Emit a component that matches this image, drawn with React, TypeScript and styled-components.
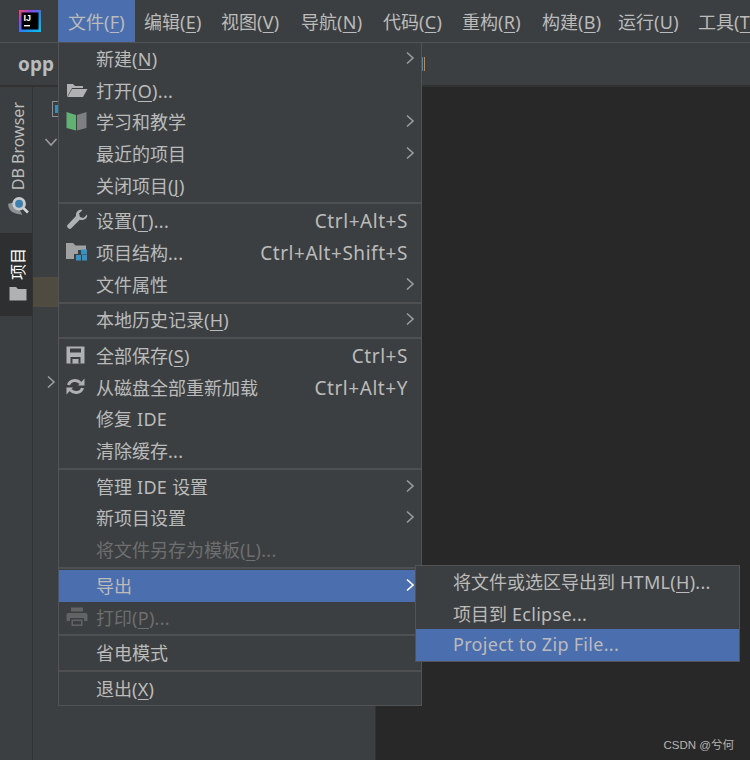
import React from "react";
import styled, { createGlobalStyle } from "styled-components";

const FONT = `"Noto Sans", "Noto Sans CJK SC", sans-serif`;
const HIGHLIGHT = "#4b6eaf";

const GlobalStyle = createGlobalStyle`
  html, body {
    margin: 0;
    padding: 0;
    background: #3c3f41;
  }
  body {
    font-family: ${FONT};
    font-size: 18px;
    color: #bbbbbb;
  }
  u {
    text-underline-offset: 3px;
    text-decoration-thickness: 1px;
  }
`;

const Window = styled.div`
  position: relative;
  display: flex;
  flex-direction: column;
  width: 750px;
  height: 760px;
  overflow: hidden;
  background: #3c3f41;
`;

const MenuBar = styled.div`
  display: flex;
  flex: 0 0 43px;
  box-sizing: border-box;
  height: 43px;
  border-bottom: 1px solid #515355;
  padding-left: 19px;
  white-space: nowrap;
`;

const LogoSlot = styled.div`
  display: flex;
  flex: 0 0 39px;
  align-items: center;
  height: 42px;
`;

const TopItem = styled.div<{ $active?: boolean; $width: number }>`
  flex: 0 0 ${p => p.$width}px;
  box-sizing: border-box;
  height: 42px;
  padding-left: ${p => (p.$active ? 10 : 9)}px;
  line-height: 44px;
  background: ${p => (p.$active ? HIGHLIGHT : "transparent")};
`;

const Toolbar = styled.div`
  flex: 0 0 42px;
  display: flex;
  align-items: center;
  padding-left: 18px;
  border-bottom: 2px solid #323232;
`;

const ProjectName = styled.span`
  width: 37px;
  font-size: 19px;
  font-weight: 700;
  color: #bbbbbb;
`;

const Caret = styled.span`
  width: 1px;
  height: 14px;
  margin-left: 367px;
  border-left: 1px solid #4a88c7;
  border-right: 1px solid #c58a3e;
`;

const Body = styled.div`
  flex: 1;
  display: flex;
  min-height: 0;
`;

const ToolStrip = styled.div`
  flex: 0 0 32px;
  display: flex;
  flex-direction: column;
  padding-top: 10px;
  border-right: 1px solid #323232;
`;

const ToolTab = styled.div<{ $active?: boolean; $height: number }>`
  display: flex;
  flex-direction: column;
  align-items: center;
  justify-content: flex-end;
  gap: 6px;
  box-sizing: border-box;
  height: ${p => p.$height}px;
  padding: 0 0 15px 3px;
  background: ${p => (p.$active ? "#2d2f30" : "transparent")};
  color: ${p => (p.$active ? "#ffffff" : "#bbbbbb")};
`;

const ToolLabel = styled.span`
  writing-mode: vertical-rl;
  text-orientation: sideways;
  transform: rotate(180deg);
  font-size: 16px;
  line-height: 20px;
  white-space: nowrap;
`;

const ProjectPanel = styled.div`
  flex: 0 0 342px;
  display: flex;
  flex-direction: column;
  border-right: 1px solid #323232;
`;

const TreeRow = styled.div<{ $height: number; $selected?: boolean }>`
  display: flex;
  align-items: center;
  height: ${p => p.$height}px;
  padding-left: 13px;
  background: ${p => (p.$selected ? "#4f4b41" : "transparent")};
`;

const Editor = styled.div`
  flex: 1;
  background: #282828;
`;

const Menu = styled.div`
  position: absolute;
  left: 58px;
  top: 42px;
  width: 364px;
  box-sizing: border-box;
  border: 1px solid #515355;
  background: #3c3f41;
`;

const SubMenu = styled(Menu)`
  left: 415px;
  top: 565px;
  width: 325px;
`;

const Row = styled.div<{ $active?: boolean; $disabled?: boolean }>`
  display: flex;
  align-items: center;
  box-sizing: border-box;
  height: 31.7px;
  padding: 0 6px 2px 7px;
  white-space: nowrap;
  background: ${p => (p.$active ? HIGHLIGHT : "transparent")};
  color: ${p => (p.$disabled ? "#6e6e6e" : "#bbbbbb")};
`;

const IconSlot = styled.span`
  flex: 0 0 30px;
  display: flex;
  align-items: center;
`;

const Label = styled.span`
  flex: 1;
`;

const Shortcut = styled.span`
  margin: 2px 7px 0 0;
  font-size: 19px;
  letter-spacing: 0.55px;
`;

const Latin = styled.span`
  letter-spacing: 0.3px;
`;

const Separator = styled.div`
  height: 2px;
  margin: 1px 0;
  background: #4e5052;
`;

const Watermark = styled.div`
  position: absolute;
  right: 16px;
  bottom: 8px;
  font-family: "Liberation Sans", "Noto Sans CJK SC", sans-serif;
  font-size: 11.5px;
  color: #b5b5b5;
`;

// "_" marks the mnemonic letter, runs of latin text get a little extra tracking
const Mnemonic: React.FC<{ text: string }> = ({ text }) => {
  const runs = text.split(/([\u4e00-\u9fff]+)/).filter(Boolean);
  return (
    <>
      {runs.map((run, i) => {
        if (/[\u4e00-\u9fff]/.test(run)) return <React.Fragment key={i}>{run}</React.Fragment>;
        const [head, tail] = run.split("_");
        return (
          <Latin key={i}>
            {head}
            {tail && <u>{tail[0]}</u>}
            {tail && tail.slice(1)}
          </Latin>
        );
      })}
    </>
  );
};

const Chevron: React.FC<{ color?: string; down?: boolean }> = ({ color = "#9a9c9e", down }) => (
  <svg width="10" height="14" viewBox="0 0 10 14" style={down ? { transform: "rotate(90deg)" } : undefined}>
    <path d="M2 1.5 L8 7 L2 12.5" fill="none" stroke={color} strokeWidth="1.6" />
  </svg>
);

const Logo = () => (
  <svg width="22" height="22" viewBox="0 0 22 22">
    <defs>
      <linearGradient id="ij" x1="0" y1="0" x2="1" y2="1">
        <stop offset="0" stopColor="#fb4a5f" />
        <stop offset="0.3" stopColor="#8a48e8" />
        <stop offset="0.6" stopColor="#1d8df0" />
        <stop offset="1" stopColor="#07c3f2" />
      </linearGradient>
    </defs>
    <rect width="22" height="22" fill="url(#ij)" />
    <rect x="2.5" y="2.5" width="17" height="17" fill="#000" />
    <text x="4.5" y="11" fontSize="9" fontWeight="700" fill="#fff" fontFamily="Liberation Sans, sans-serif">IJ</text>
    <rect x="5" y="15" width="6" height="1.4" fill="#fff" />
  </svg>
);

const OpenFolderIcon = () => (
  <svg width="22" height="16" viewBox="0 0 22 16">
    <path d="M1 15 V2 H7 L9 4 H17 V6 H6 Z" fill="#afb1b3" />
    <path d="M1.5 15 L6 7 H21.5 L17 15 Z" fill="#afb1b3" />
  </svg>
);

const BookIcon = () => (
  <svg width="21" height="20" viewBox="0 0 21 20">
    <path d="M0.5 1 L10 4 V19.5 L0.5 17 Z" fill="#62b073" />
    <path d="M11 4 L20.5 1 V17 L11 19.5 Z" fill="#7d7f80" />
  </svg>
);

const WrenchIcon = () => (
  <svg width="22" height="22" viewBox="0 0 22 22">
    <path
      d="M21 5.5 L17.5 9 L14 8 L13 4.5 L16.5 1 C13 0 9.5 2.5 10 7 L1.5 16 C0 17.8 3.2 21 5 19.5 L13.8 10.8 C18.5 11.8 22 9 21 5.5 Z"
      fill="#afb1b3"
    />
  </svg>
);

const StructureIcon = () => (
  <svg width="22" height="20" viewBox="0 0 22 20">
    <path d="M0 1 H7 L9.5 3.5 H20 V8 H12 V12 H8 V17 H0 Z" fill="#9fa1a3" />
    <rect x="15" y="7.5" width="6" height="5" fill="#3592c4" />
    <rect x="10" y="13" width="5" height="5.5" fill="#3592c4" />
    <rect x="16" y="13" width="5" height="5.5" fill="#3592c4" />
  </svg>
);

const SaveIcon = () => (
  <svg width="19" height="18" viewBox="0 0 19 18">
    <path d="M0.5 0.5 H18.5 V17.5 H0.5 Z" fill="#afb1b3" />
    <rect x="4" y="2.5" width="11" height="4" fill="#3c3f41" />
    <rect x="4.5" y="11" width="10" height="6.5" fill="#3c3f41" />
    <rect x="6.5" y="13" width="6" height="4.5" fill="#afb1b3" />
  </svg>
);

const ReloadIcon = () => (
  <svg width="19" height="19" viewBox="0 0 19 19" fill="none">
    <path d="M2.5 8 C3.5 3.5 10.5 1.5 14.5 6" stroke="#afb1b3" strokeWidth="3" />
    <path d="M16.5 11 C15.5 15.5 8.5 17.5 4.5 13" stroke="#afb1b3" strokeWidth="3" />
    <path d="M12 8.5 H18.5 V1.5 Z" fill="#afb1b3" />
    <path d="M7 10.5 H0.5 V17.5 Z" fill="#afb1b3" />
  </svg>
);

const PrinterIcon = () => (
  <svg width="22" height="20" viewBox="0 0 22 20">
    <rect x="5" y="0.5" width="12" height="4" fill="#616365" />
    <path d="M0.5 8 Q0.5 6 2.5 6 H19.5 Q21.5 6 21.5 8 V14 H18 V11 H4 V14 H0.5 Z" fill="#616365" />
    <path d="M5.5 12.5 H16.5 V19 H5.5 Z M7 14 V17.5 H15 V14 Z" fill="#616365" fillRule="evenodd" />
  </svg>
);

const TabFolderIcon = () => (
  <svg width="18" height="15" viewBox="0 0 18 15">
    <path d="M0.5 1 H7 L9 3 H17.5 V14.5 H0.5 Z" fill="#afb1b3" />
  </svg>
);

const DbIcon = () => (
  <svg width="22" height="22" viewBox="0 1 20 20">
    <path d="M1 8 Q1 15 8 17 L14 18 Q10 12 10 6 Z" fill="#8d9296" />
    <circle cx="11" cy="8" r="6.2" fill="#c8cbcd" />
    <circle cx="11" cy="8" r="3.6" fill="#3f7fae" />
    <path d="M15 12 L19 16" stroke="#d5d7d8" strokeWidth="2.4" />
  </svg>
);

const ModuleIcon = styled.span`
  width: 7px;
  height: 16px;
  margin-left: 6px;
  box-sizing: border-box;
  border: 1px solid #8d9092;
  border-right: none;
  background: linear-gradient(#3f8bb0, #3f8bb0) 2px 3px / 5px 8px no-repeat;
`;

type MenuItem = {
  label: string;
  icon?: React.ReactNode;
  shortcut?: string;
  arrow?: boolean;
  active?: boolean;
  disabled?: boolean;
};

const MENU_GROUPS: MenuItem[][] = [
  [
    { label: "新建(_N)", arrow: true },
    { label: "打开(_O)...", icon: <OpenFolderIcon /> },
    { label: "学习和教学", icon: <BookIcon />, arrow: true },
    { label: "最近的项目", arrow: true },
    { label: "关闭项目(_J)" }
  ],
  [
    { label: "设置(_T)...", icon: <WrenchIcon />, shortcut: "Ctrl+Alt+S" },
    { label: "项目结构...", icon: <StructureIcon />, shortcut: "Ctrl+Alt+Shift+S" },
    { label: "文件属性", arrow: true }
  ],
  [{ label: "本地历史记录(_H)", arrow: true }],
  [
    { label: "全部保存(_S)", icon: <SaveIcon />, shortcut: "Ctrl+S" },
    { label: "从磁盘全部重新加载", icon: <ReloadIcon />, shortcut: "Ctrl+Alt+Y" },
    { label: "修复 IDE" },
    { label: "清除缓存..." }
  ],
  [
    { label: "管理 IDE 设置", arrow: true },
    { label: "新项目设置", arrow: true },
    { label: "将文件另存为模板(_L)...", disabled: true }
  ],
  [
    { label: "导出", arrow: true, active: true },
    { label: "打印(_P)...", icon: <PrinterIcon />, disabled: true }
  ],
  [{ label: "省电模式" }],
  [{ label: "退出(_X)" }]
];

const TOP_ITEMS = [
  { label: "文件(_F)", width: 77, active: true },
  { label: "编辑(_E)", width: 77 },
  { label: "视图(_V)", width: 80 },
  { label: "导航(_N)", width: 82 },
  { label: "代码(_C)", width: 79 },
  { label: "重构(_R)", width: 80 },
  { label: "构建(_B)", width: 76 },
  { label: "运行(_U)", width: 80 },
  { label: "工具(_T)", width: 80 }
];

const MenuRow: React.FC<{ item: MenuItem }> = ({ item }) => (
  <Row $active={item.active} $disabled={item.disabled}>
    <IconSlot>{item.icon}</IconSlot>
    <Label>
      <Mnemonic text={item.label} />
    </Label>
    {item.shortcut && <Shortcut>{item.shortcut}</Shortcut>}
    {item.arrow && <Chevron color={item.active ? "#ffffff" : "#9a9c9e"} />}
  </Row>
);

const SUB_ITEMS: MenuItem[] = [
  { label: "将文件或选区导出到 HTML(_H)..." },
  { label: "项目到 Eclipse..." },
  { label: "Project to Zip File...", active: true }
];

const SubRow = styled(Row)`
  padding-left: 37px;
`;

export default function App() {
  return (
    <Window>
      <GlobalStyle />
      <MenuBar>
        <LogoSlot>
          <Logo />
        </LogoSlot>
        {TOP_ITEMS.map(item => (
          <TopItem key={item.label} $active={item.active} $width={item.width}>
            <Mnemonic text={item.label} />
          </TopItem>
        ))}
      </MenuBar>
      <Toolbar>
        <ProjectName>opp</ProjectName>
        <Caret />
      </Toolbar>
      <Body>
        <ToolStrip>
          <ToolTab $height={136}>
            <ToolLabel>DB Browser</ToolLabel>
            <DbIcon />
          </ToolTab>
          <ToolTab $active $height={83}>
            <ToolLabel>项目</ToolLabel>
            <TabFolderIcon />
          </ToolTab>
        </ToolStrip>
        <ProjectPanel>
          <TreeRow $height={14} />
          <TreeRow $height={16}>
            <ModuleIcon />
          </TreeRow>
          <TreeRow $height={49}>
            <Chevron down />
          </TreeRow>
          <TreeRow $height={111} />
          <TreeRow $height={30} $selected />
          <TreeRow $height={60} />
          <TreeRow $height={30}>
            <Chevron />
          </TreeRow>
        </ProjectPanel>
        <Editor />
      </Body>
      <Menu>
        {MENU_GROUPS.map((group, i) => (
          <React.Fragment key={i}>
            {i > 0 && <Separator />}
            {group.map(item => (
              <MenuRow key={item.label} item={item} />
            ))}
          </React.Fragment>
        ))}
      </Menu>
      <SubMenu>
        {SUB_ITEMS.map(item => (
          <SubRow key={item.label} $active={item.active}>
            <Label>
              <Mnemonic text={item.label} />
            </Label>
          </SubRow>
        ))}
      </SubMenu>
      <Watermark>CSDN @兮何</Watermark>
    </Window>
  );
}
